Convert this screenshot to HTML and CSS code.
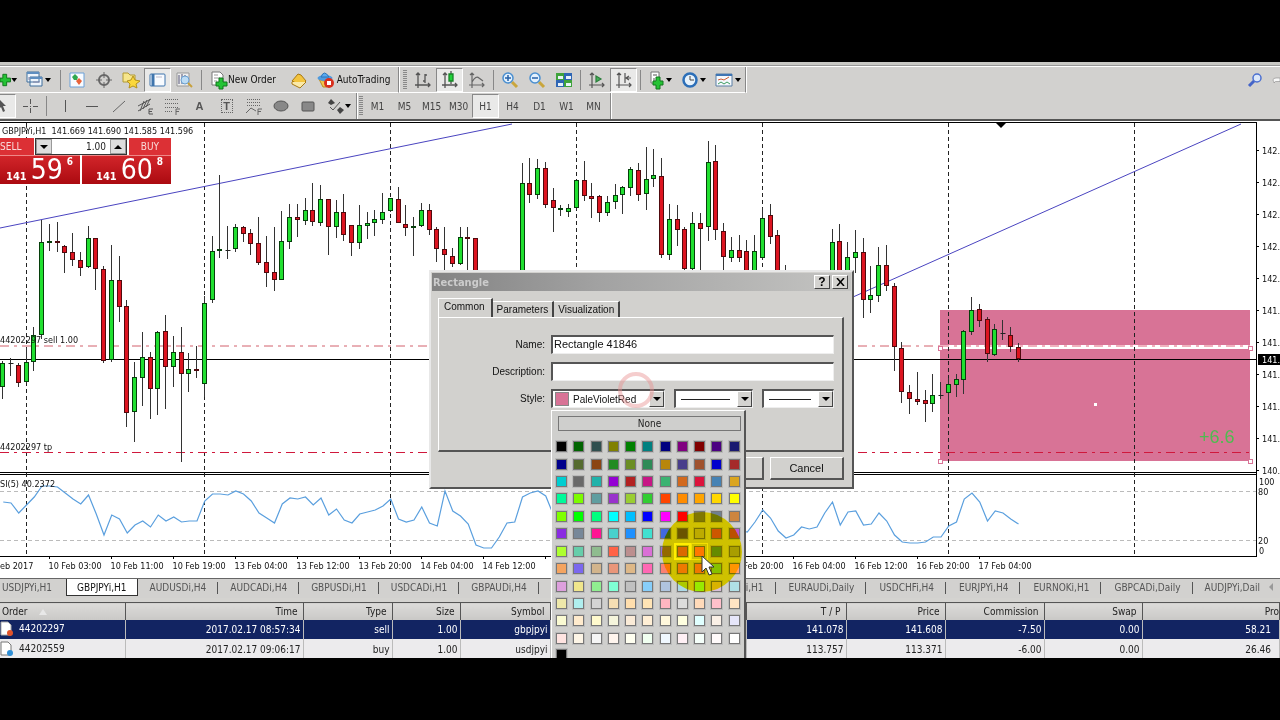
FILE: index.html
```html
<!DOCTYPE html>
<html lang="en">
<head>
<meta charset="utf-8">
<title>GBPJPYi,H1</title>
<link rel="stylesheet" href="styles.css">
</head>
<body>
<main class="app">
  <div class="menu-edge"></div>
  <div class="toolbar">
    <div class="group group-main">
      <button class="tool first" aria-label="New chart"><svg width="20" height="20" viewBox="0 0 20 20"><path class="plus" d="M3 4h4v4h4v4H7v4H3v-4H0V8h3z"/><path d="M12 8h6l-3 4z"/></svg></button>
      <button class="tool wide" aria-label="Profiles"><svg width="26" height="20" viewBox="0 0 26 20"><path d="M2 2h12v10H2zM5 7h12v9H5z" fill="#eef4fb" stroke="#3e6e9c"/><path d="M2 3h12M5 8h12" stroke="#5e8ec0" stroke-width="2"/><path d="M8 12h7M4 7v3" stroke="#88a"/><path d="M20 8h6l-3 4z"/></svg></button>
      <i class="sep"></i>
      <button class="tool" aria-label="Market watch"><svg width="18" height="18" viewBox="0 0 18 18"><path d="M2 2h14v14H2z" fill="#f8fbff" stroke="#6aa0d8"/><path d="M4 6l3-3 3 3-1 3H6z" fill="#2fa84f"/><path d="M8 10l3-3 3 3-3 4z" fill="#e8623a"/></svg></button>
      <button class="tool" aria-label="Data window"><svg width="18" height="18" viewBox="0 0 18 18" fill="none" stroke="#666" stroke-width="2"><circle cx="9" cy="9" r="5"/><path d="M9 1v6M9 11v6M1 9h6M11 9h6" stroke-width="1"/></svg></button>
      <button class="tool" aria-label="Navigator"><svg width="20" height="18" viewBox="0 0 20 18"><path d="M2 2h5l2 2h5v7H2z" fill="#f6e58b" stroke="#b29a35"/><path d="M12 5l2 4 5 1-4 3 1 4-4-2-4 2 1-4-3-3 4-1z" fill="#fbd83b" stroke="#b5921c"/></svg></button>
      <button class="tool pressed" aria-label="Terminal"><svg width="18" height="18" viewBox="0 0 18 18"><rect x="1" y="3" width="15" height="12" rx="1" fill="#f8fbff" stroke="#3f75ad"/><path d="M4 3v12" stroke="#3f75ad" stroke-width="3"/><path d="M7 6h6" stroke="#bbc"/></svg></button>
      <button class="tool" aria-label="Strategy tester"><svg width="20" height="18" viewBox="0 0 20 18"><path d="M2 2h12v13H2z" fill="#eee" stroke="#999"/><path d="M4 4v9M7 3v10M10 4v7" stroke="#557"/><circle cx="10" cy="9" r="4" fill="#bcdcf5" stroke="#6a9fd0"/><path d="M13 12l4 4" stroke="#c8a13c" stroke-width="2"/></svg></button>
      <i class="sep"></i>
      <button class="tool text"><svg width="18" height="20" viewBox="0 0 18 20"><path d="M2 2h8l3 3v10H2z" fill="#fff" stroke="#777"/><path d="M4 5h4M4 8h6M4 11h3" stroke="#999"/><path class="plus" d="M9 8h4v4h4v4h-4v3H9v-3H6v-4h3z"/></svg>New Order</button>
      <button class="tool" aria-label="MetaEditor"><svg width="18" height="18" viewBox="0 0 18 18"><path d="M2 10l6-7 3 1 5 6-5 5z" fill="#f3c43e" stroke="#a87913"/><path d="M2 10l9 5 5-5" fill="none" stroke="#a87913"/><path d="M2 11v2l8 4 6-6" fill="#fae9a8" stroke="#a87913"/></svg></button>
      <button class="tool text auto"><svg width="18" height="18" viewBox="0 0 18 18"><path d="M2 8q5 4 11 0l-3 8H6z" fill="#f3c84e" stroke="#b98f24"/><ellipse cx="8" cy="7" rx="7.500" ry="3" fill="#4f9be0"/><path d="M4 6q3-8 8 0z" fill="#5aaaf0" stroke="#2d75b8"/><circle cx="12" cy="12" r="5" fill="#d8301e"/><path d="M10 10h4v4h-4z" fill="#fff"/></svg>AutoTrading</button>
    </div>
    <div class="group">
      <i class="grip"></i>
      <button class="tool" aria-label="Bar chart"><svg width="18" height="18" viewBox="0 0 18 18" fill="none" stroke="#555" stroke-width="1.3"><path d="M4 2v15M1 14h15M2 4l2-2 2 2M14 12l2 2-2 2M11 3v9M9 10h2M11 4h2"/></svg></button>
      <button class="tool pressed" aria-label="Candlesticks"><svg width="18" height="18" viewBox="0 0 18 18" fill="none" stroke="#555" stroke-width="1.3"><path d="M4 2v15M1 14h15M2 4l2-2 2 2M14 12l2 2-2 2M10 0v13"/><path d="M8 3h4v7H8z" fill="#22d13a" stroke="#168527"/></svg></button>
      <button class="tool" aria-label="Line chart"><svg width="18" height="18" viewBox="0 0 18 18" fill="none" stroke="#666" stroke-width="1.2"><path d="M4 2v15M1 14h15M2 4l2-2 2 2M14 12l2 2-2 2M4 11q4-7 7-4l4 3"/></svg></button>
      <i class="sep"></i>
      <button class="tool" aria-label="Zoom in"><svg width="18" height="18" viewBox="0 0 18 18"><path d="M11 11l5 5" stroke="#c9a63c" stroke-width="3"/><circle cx="7" cy="7" r="5" fill="#e3f1fd" stroke="#4a8fd0" stroke-width="1.5"/><path d="M4 7h6M7 4v6" stroke="#2761a8" stroke-width="1.5"/></svg></button>
      <button class="tool" aria-label="Zoom out"><svg width="18" height="18" viewBox="0 0 18 18"><path d="M11 11l5 5" stroke="#c9a63c" stroke-width="3"/><circle cx="7" cy="7" r="5" fill="#e3f1fd" stroke="#4a8fd0" stroke-width="1.5"/><path d="M4 7h6" stroke="#2761a8" stroke-width="1.5"/></svg></button>
      <button class="tool" aria-label="Tile windows"><svg width="18" height="18" viewBox="0 0 18 18"><path d="M1 2h8v7H1zM9 9h8v7H9z" fill="#3fa33b"/><path d="M9 2h8v7H9zM1 9h8v7H1z" fill="#2f66b5"/><path d="M3 5h5v3H3zM11 5h5v3h-5zM3 12h5v3H3zM11 12h5v3h-5z" fill="#e8f2fa"/></svg></button>
      <i class="sep"></i>
      <button class="tool" aria-label="Auto scroll"><svg width="18" height="18" viewBox="0 0 18 18" fill="none" stroke="#555" stroke-width="1.2"><path d="M4 2v15M1 14h15M2 4l2-2 2 2M14 12l2 2-2 2"/><path d="M8 5l5 3-5 3z" fill="#45b058" stroke="#2b7d3b"/></svg></button>
      <button class="tool pressed" aria-label="Chart shift"><svg width="18" height="18" viewBox="0 0 18 18" fill="none" stroke="#555" stroke-width="1.2"><path d="M4 2v15M1 14h15M2 4l2-2 2 2M14 12l2 2-2 2M10 2v10M16 7h-5M14 5l-3 2 3 2"/></svg></button>
      <i class="sep"></i>
      <button class="tool drop" aria-label="Indicators"><svg width="26" height="20" viewBox="0 0 26 20"><path d="M4 2h8v11H4z" fill="#fff" stroke="#777"/><path d="M6 5h4M7 8v3" stroke="#555"/><path class="plus" d="M9 7h4v4h3v4h-3v4H9v-4H6v-4h3z"/><path d="M19 8h6l-3 4z"/></svg></button>
      <button class="tool drop" aria-label="Periods"><svg width="26" height="20" viewBox="0 0 26 20"><circle cx="9" cy="10" r="6.500" fill="#e8f3fc" stroke="#2c6fb8" stroke-width="2.500"/><path d="M9 6v4h4" fill="none" stroke="#444"/><path d="M19 8h6l-3 4z"/></svg></button>
      <button class="tool drop" aria-label="Templates"><svg width="26" height="20" viewBox="0 0 26 20"><path d="M1 4h16v12H1z" fill="#f4f8fc" stroke="#5b7ea5"/><path d="M1 5h16" stroke="#3e75b4" stroke-width="2"/><path d="M3 10l3-1 3 1 5-3" fill="none" stroke="#cf5b33"/><path d="M3 14l3-2 3 2 3-2 3 2" fill="none" stroke="#3d9c60"/><path d="M20 8h6l-3 4z"/></svg></button>
    </div>
    <div class="right-tools">
      <button class="tool" aria-label="Search"><svg width="16" height="16" viewBox="0 0 16 16"><circle cx="10" cy="6" r="4" fill="#dce8fa" stroke="#4b6fd0" stroke-width="1.500"/><path d="M7 9l-5 5" stroke="#4464c8" stroke-width="3"/></svg></button>
      <button class="tool chat" aria-label="Messages"><svg width="16" height="16" viewBox="0 0 16 16"><path d="M8 4q-6 0-6 4 0 2 2 3v3l3-3h9V4z" fill="#f8f8f8" stroke="#777"/></svg></button>
    </div>
  </div>
  <div class="toolbar second">
    <div class="group group-main">
      <button class="tool cursor-tool pressed" aria-label="Cursor"><svg width="12" height="16" viewBox="0 0 12 16"><path d="M0 2l6 6H3l2 5-2 1-2-5-1 1z" fill="#555"/></svg></button>
      <button class="tool" aria-label="Crosshair"><svg width="16" height="16" viewBox="0 0 16 16" stroke="#555"><path d="M8.500 1v5M8.500 10v5M1 8.500h5M11 8.500h5M8 8.500h1"/></svg></button>
      <i class="sep big"></i>
      <button class="tool" aria-label="Vertical line"><svg width="16" height="16" viewBox="0 0 16 16" stroke="#555"><path d="M8.500 2v12"/></svg></button>
      <button class="tool" aria-label="Horizontal line"><svg width="16" height="16" viewBox="0 0 16 16" stroke="#555"><path d="M2 8.500h12"/></svg></button>
      <button class="tool" aria-label="Trendline"><svg width="16" height="16" viewBox="0 0 16 16" stroke="#666"><path d="M2 14L14 3"/></svg></button>
      <button class="tool" aria-label="Equidistant channel"><svg width="18" height="18" viewBox="0 0 18 18" stroke="#555" fill="none"><path d="M1 9L14 2M1 14l12-7M3 14L7 4M6 12L10 3M9 10l4-8"/><path d="M16 12h-4v5h4M12 14.500h3"/></svg></button>
      <button class="tool" aria-label="Fibonacci"><svg width="18" height="18" viewBox="0 0 18 18" stroke="#666" fill="none"><path d="M1 2.500h14M1 6.500h14M1 10.500h14M1 14.500h8" stroke-dasharray="1 1"/><path d="M16 12h-4v6M12 14.500h3"/></svg></button>
      <button class="tool letter">A</button>
      <button class="tool letter"><span class="boxed">T</span></button>
      <button class="tool" aria-label="Expansion"><svg width="18" height="18" viewBox="0 0 18 18" stroke="#666" fill="none"><path d="M2 2.500h14M2 5.500h14M2 8.500h14" stroke-dasharray="1 1"/><path d="M1 16l5-5 5 3M17 12h-4v6M13 14.500h3"/></svg></button>
      <button class="tool" aria-label="Ellipse"><svg width="18" height="16" viewBox="0 0 18 16"><ellipse cx="9" cy="8" rx="7" ry="5" fill="#888" stroke="#555"/></svg></button>
      <button class="tool" aria-label="Rectangle"><svg width="18" height="16" viewBox="0 0 18 16"><rect x="3" y="4" width="12" height="9" rx="1" fill="#888" stroke="#555"/></svg></button>
      <button class="tool shapes" aria-label="Arrows"><svg width="26" height="18" viewBox="0 0 26 18"><path d="M5 2l4 4-4 2-3-2zM14 10l4 3-4 4-3-4z" fill="#444"/><path d="M4 10l3 3 7-8" stroke="#555" fill="none"/><path d="M19 7h6l-3 4z"/></svg></button>
    </div>
    <div class="group periods">
      <i class="grip"></i>
      <button class="tool">M1</button><button class="tool">M5</button><button class="tool">M15</button><button class="tool">M30</button><button class="tool pressed">H1</button><button class="tool">H4</button><button class="tool">D1</button><button class="tool">W1</button><button class="tool">MN</button>
    </div>
  </div>

  <section class="chart">
    <svg id="plot" class="plot" viewBox="0 121 1280 457" preserveAspectRatio="xMinYMin slice" role="img" aria-label="GBPJPY hourly candles with RSI"></svg>
    <div class="trade">
      <button class="deal sell-label">SELL</button>
      <div class="lot"><button aria-label="Decrease volume"><i class="down"></i></button><input value="1.00" aria-label="Volume"><button aria-label="Increase volume"><i class="up"></i></button></div>
      <button class="deal">BUY</button>
      <button class="quote bid"><small>141</small><b>59</b><sup>6</sup></button>
      <button class="quote ask"><small>141</small><b>60</b><sup>8</sup></button>
    </div>
  </section>

  <nav class="charts">
    <a href="#" class="lead">USDJPYi,H1</a><a href="#" class="active">GBPJPYi,H1</a><a href="#">AUDUSDi,H4</a><a href="#">AUDCADi,H4</a><a href="#">GBPUSDi,H1</a><a href="#">USDCADi,H1</a><a href="#">GBPAUDi,H4</a><a href="#">NZDUSDi,H4</a>
    <span class="more"><a href="#">AUDNZDi,H1</a><a href="#">EURAUDi,Daily</a><a href="#">USDCHFi,H4</a><a href="#">EURJPYi,H4</a><a href="#">EURNOKi,H1</a><a href="#">GBPCADi,Daily</a><a href="#" class="last">AUDJPYi,Dail</a></span>
    <button class="scroll" aria-label="Scroll tabs"><svg width="8" height="8" viewBox="0 0 8 8"><path d="M5 0v8L1 4z" fill="#999"/></svg></button>
  </nav>

  <table class="orders">
    <colgroup><col class="c1"><col class="c2"><col class="c3"><col class="c4"><col class="c5"><col class="c6"><col class="c7"><col class="c8"><col class="c9"><col class="c10"><col></colgroup>
    <thead><tr><th class="id">Order <span class="asc"></span></th><th>Time</th><th>Type</th><th>Size</th><th>Symbol</th><th></th><th>T / P</th><th>Price</th><th>Commission</th><th>Swap</th><th class="profit">Pro</th></tr></thead>
    <tbody>
      <tr class="selected"><td class="id"><svg width="14" height="16" viewBox="0 0 14 16"><path d="M1 1h7l3 3v10H1z" fill="#fff" stroke="#aaa"/><circle cx="10" cy="12" r="3" fill="#e2532a"/></svg>44202297</td><td>2017.02.17 08:57:34</td><td>sell</td><td>1.00</td><td>gbpjpyi</td><td></td><td>141.078</td><td>141.608</td><td>-7.50</td><td>0.00</td><td class="gain">58.21</td></tr>
      <tr><td class="id"><svg width="14" height="16" viewBox="0 0 14 16"><path d="M1 1h7l3 3v10H1z" fill="#fff" stroke="#777"/><circle cx="10" cy="12" r="3" fill="#2f8fd6"/></svg>44202559</td><td>2017.02.17 09:06:17</td><td>buy</td><td>1.00</td><td>usdjpyi</td><td></td><td>113.757</td><td>113.371</td><td>-6.00</td><td>0.00</td><td class="gain">26.46</td></tr>
    </tbody>
  </table>

  <section class="dialog" role="dialog" aria-label="Rectangle">
    <header class="title"><h2>Rectangle</h2><button aria-label="Help">?</button><button aria-label="Close"><svg width="9" height="8" viewBox="0 0 9 8"><path d="M1 0l7 8M8 0L1 8" stroke="#000" stroke-width="1.500"/></svg></button></header>
    <div class="tabs"><button class="on">Common</button><button>Parameters</button><button>Visualization</button></div>
    <form class="sheet">
      <label for="name">Name:</label><input id="name" value="Rectangle 41846">
      <label for="desc">Description:</label><input id="desc">
      <label for="color">Style:</label>
      <div class="styles">
        <div class="combo color"><select id="color"><option>PaleVioletRed</option></select><i></i></div>
        <div class="combo line mid"><select aria-label="Line style"><option></option></select><i></i></div>
        <div class="combo line"><select aria-label="Line width"><option></option></select><i></i></div>
      </div>
    </form>
    <div class="actions"><button>OK</button><button>Cancel</button></div>
  </section>
  <svg class="click-ring" width="38" height="38" viewBox="0 0 38 38"><circle cx="19" cy="19" r="16" fill="none" stroke="#e89090" stroke-opacity=".45" stroke-width="4"/></svg>

  <div class="palette">
    <button class="none">None</button>
    <div class="swatches" id="swatches"></div>
    <button class="swatch extra" aria-label="Custom"></button>
  </div>
  <div class="spot"></div>
  <svg class="pointer" width="14" height="22" viewBox="0 0 14 22"><path d="M1 1v16l4-4 3 7 3-1-3-7h5z" fill="#fff" stroke="#333"/></svg>
</main>
<script src="chart.js"></script>
</body>
</html>
```
FILE: styles.css
```css
* { box-sizing: border-box; }
body { margin: 0; background: #000; font: 10px "DejaVu Sans Condensed", "DejaVu Sans", sans-serif; color: #222; }
button, input, select { font: inherit; color: inherit; border: 0; margin: 0; padding: 0; border-radius: 0; }
button { background: none; }
.app { position: relative; margin: 62px 0; height: calc(100vh - 124px); overflow: hidden; background: #d4d3d0; display: flex; flex-direction: column; }
.menu-edge { height: 4px; flex: none; background: #c8c8c4; border-bottom: 1px solid #999; }

.toolbar { display: flex; flex: none; height: 27px; border-top: 1px solid #fff; background: #d2d1cf; }
.toolbar.second { border-top: 0; border-bottom: 2px solid #555; height: 28px; }
.group { display: flex; align-items: center; border-right: 1px solid #888; border-bottom: 1px solid #fff; box-shadow: 1px 0 #fff; }
.second .group { border-bottom: 0; }
.tool { width: 27px; height: 24px; display: flex; align-items: center; justify-content: center; flex: none; color: #444; }
.pressed { background: #e9e9e8; border: 1px solid; border-color: #888 #fff #fff #888; }
.first { width: 19px; justify-content: flex-start; }
.wide { width: 38px; }
.drop { width: 34px; }
.text { width: 81px; color: #111; padding-right: 3px; }
.auto { width: 86px; gap: 2px; }
.plus { fill: #25c335; stroke: #11761c; }
.sep { width: 6px; height: 20px; flex: none; background: linear-gradient(#888, #888) 3px 0 / 1px 100% no-repeat; }
.sep.big { width: 8px; }
.grip { width: 10px; height: 20px; flex: none; background: repeating-linear-gradient(#888 0 1px, transparent 1px 2px) 4px 0 / 4px 100% no-repeat; }
.periods .grip { width: 7px; background-position: 2px 0; }
.periods { padding-right: 3px; }
.right-tools { margin-left: auto; display: flex; align-items: center; }
.right-tools .chat { width: 12px; justify-content: flex-start; overflow: hidden; padding-left: 4px; }
.cursor-tool { width: 16px; justify-content: flex-start; border-left: 0; }
.shapes { width: 35px; }
.letter { font: bold 11px "Liberation Sans", sans-serif; color: #555; }
.boxed { border: 1px dotted #666; width: 12px; line-height: 12px; }

.chart { position: relative; flex: none; height: 457px; background: #fff; }
.plot { display: block; width: 100%; height: 100%; }
.plot text { font-size: 9px; fill: #111; white-space: pre; }
.trade { position: absolute; left: 0; top: 17px; width: 171px; display: grid; grid-template-columns: 34px 46px 2px 47px 42px; grid-template-rows: 17px 29px; }
.deal { background: #dc3035; color: #f8d9d9; height: 17px; }
.sell-label { text-align: left; }
.lot { grid-column: 2 / 5; display: flex; border: 1px solid #333; margin: 0 2px 0 1px; background: #fff; height: 17px; }
.lot button { width: 16px; background: #ddd; display: grid; place-items: center; border: 1px solid #999; flex: none; }
.lot input { flex: 1; min-width: 0; text-align: right; padding-right: 4px; background: #fff; }
.down, .up { border: 4px solid transparent; border-top: 4px solid #000; border-bottom: 0; }
.up { border-bottom: 4px solid #000; border-top: 0; }
.quote { grid-column: 1 / 3; background: linear-gradient(#d2252a, #ab0a10); color: #fff; display: flex; align-items: flex-end; line-height: 1; padding: 0 4px 2px 6px; height: 29px; gap: 4px; border-top: 1px solid #e88; }
.quote.ask { grid-column: 4 / 6; padding-left: 14px; }
.quote small { font-size: 11px; font-weight: bold; }
.quote b { font-size: 28px; font-weight: normal; line-height: 24px; }
.quote sup { font-size: 10px; font-weight: bold; align-self: flex-start; padding-top: 1px; }

.charts { display: flex; flex: none; height: 20px; border-top: 1px solid #666; background: #d2d1cf; white-space: nowrap; overflow: hidden; }
.charts a { color: #555; text-decoration: none; padding: 0 12px; line-height: 17px; height: 17px; flex: none; background: linear-gradient(#555, #555) 100% 3px / 1px 12px no-repeat; }
.charts .lead { padding: 0 14px 0 2px; background: none; }
.charts .active { background: #fff; color: #111; border: 1px solid #333; border-top: 0; padding: 0 10px; }
.charts .more { margin-left: auto; display: flex; }
.charts .more a { padding: 0 12px 0 13px; }
.charts .more .last { background: none; padding: 0 4px 0 12px; }
.scroll { width: 16px; height: 17px; flex: none; }

.orders { width: 100%; table-layout: fixed; border-collapse: collapse; flex: none; margin-top: 4px; }
.orders th { height: 17px; font-weight: normal; background: linear-gradient(#dcdbd9, #c9c8c6); border-right: 1px solid #555; border-top: 1px solid #555; }
.orders th, .orders td { text-align: right; padding: 0 5px 0 0; white-space: nowrap; overflow: hidden; }
.orders td { height: 19px; border-right: 1px solid #bbb; padding-right: 2px; }
.orders tbody tr { background: #ecebed; height: 21px; }
.orders tbody .selected { background: #122462; color: #fff; height: 19px; }
.orders .id { text-align: left; padding-left: 2px; }
.orders td.id svg { vertical-align: middle; margin-right: 5px; margin-left: -2px; }
.orders .gain { padding-right: 8px; }
.orders .profit { padding-right: 0; }
.asc { display: inline-block; border: 4px solid transparent; border-top: 0; border-bottom: 6px solid #e8e8e8; margin-left: 9px; }
.c1 { width: 125px; } .c2 { width: 178px; } .c3 { width: 89px; } .c4 { width: 68px; } .c5 { width: 90px; }
.c6 { width: 196px; } .c7 { width: 100px; } .c8, .c9 { width: 99px; } .c10 { width: 98px; }

.dialog { position: absolute; left: 429px; top: 208px; width: 425px; height: 219px; background: #d2d1ce; border: 2px solid; border-color: #e8e8e8 #555 #555 #e8e8e8; padding: 1px 8px 0 1px; font: 10px "Liberation Sans", Arial, sans-serif; color: #111; display: flex; flex-direction: column; }
.title { display: flex; align-items: center; flex: none; height: 18px; margin-right: -7px; padding: 0 3px 0 1px; background: linear-gradient(90deg, #838383, #a2a2a2 40%, #c4c4c2); gap: 2px; }
.title h2 { margin: 0 auto 0 0; font: bold 11px "DejaVu Sans Condensed", sans-serif; color: #ccc; }
.title button { width: 16px; height: 14px; background: #d4d3d0; border: 1px solid; border-color: #fff #444 #444 #fff; font-weight: bold; font-size: 12px; line-height: 10px; display: grid; place-items: center; color: #000; }
.tabs { display: flex; align-items: flex-end; padding-left: 6px; height: 26px; flex: none; }
.tabs button { height: 16px; padding: 0 4px; border: solid; border-width: 1px 2px 0 0; border-color: #fff #444; }
.tabs .on { height: 19px; padding: 0 6px 3px 5px; border-left: 1px solid #fff; background: #d2d1ce; }
.sheet { flex: none; height: 135px; margin-left: 6px; padding: 17px 9px 0 8px; border: 1px solid; border-color: #fff #555 #555 #fff; border-right-width: 2px; border-bottom-width: 2px; display: grid; grid-template-columns: 98px 1fr; grid-auto-rows: 19px; row-gap: 8px; column-gap: 6px; align-items: center; }
.sheet label { text-align: right; }
.sheet input { width: 100%; height: 19px; background: #fff; padding: 0 1px 2px; border: 1px solid #eee; border-top: 2px solid #555; border-left: 2px solid #555; font-size: 11px; }
.styles { display: flex; gap: 9px; }
.combo { position: relative; width: 72px; height: 19px; background: #fff; border: 1px solid #eee; border-top: 2px solid #555; border-left: 2px solid #555; }
.combo.color { width: 114px; }
.combo.mid { width: 79px; }
.combo select { appearance: none; width: 100%; height: 16px; background: transparent; display: block; }
.combo.color select { padding-left: 20px; background: linear-gradient(#d87396, #d87396) 3px 2px / 12px 12px no-repeat, linear-gradient(#888, #888) 2px 1px / 14px 14px no-repeat; }
.combo.line select { background: linear-gradient(#222, #222) 5px 8px / calc(100% - 27px) 1px no-repeat; }
.combo i { position: absolute; right: 0; top: 0; width: 15px; height: 16px; background: #d4d3d0; border: 1px solid; border-color: #fff #444 #444 #fff; pointer-events: none; }
.combo i::after { content: ""; position: absolute; left: 3px; top: 5px; border: 4px solid transparent; border-top-color: #000; border-bottom: 0; }
.actions { display: flex; justify-content: flex-end; gap: 6px; margin-top: 5px; font-size: 11px; }
.actions button { width: 74px; height: 23px; border: 1px solid; border-color: #fff #555 #555 #fff; border-right-width: 2px; border-bottom-width: 2px; }
.click-ring { position: absolute; left: 617px; top: 309px; }

.palette { position: absolute; left: 551px; top: 348px; width: 195px; height: 260px; background: #cfcfcd; border: 1px solid #fff; border-right: 2px solid #555; padding: 5px 0 0 4px; }
.none { display: block; width: 183px; height: 15px; margin-left: 2px; border: 1px solid #777; }
.swatches { display: grid; grid-template-columns: repeat(11, 1fr); height: 209px; margin: 7px -2px 0 0; align-items: center; }
.swatch { display: block; width: 11px; height: 11px; border: 1px solid #777; box-shadow: 0 0 0 1px #bbb; }
.swatch.picked { outline: 2px solid #ff0; outline-offset: 1px; box-shadow: none; }
.swatch.near { outline: 1px solid #f4f000; outline-offset: 2px; box-shadow: none; }
.extra { background: #000; margin-top: 2px; }
.spot { position: absolute; left: 662px; top: 450px; width: 80px; height: 80px; border-radius: 50%; background: #ffee00; mix-blend-mode: multiply; pointer-events: none; }
.pointer { position: absolute; left: 701px; top: 493px; pointer-events: none; }
```
FILE: chart.js
```js
const NS = "http://www.w3.org/2000/svg";
const plot = document.getElementById("plot");
function add(tag, attrs, text) {
  const el = document.createElementNS(NS, tag);
  for (const k in attrs) el.setAttribute(k, attrs[k]);
  if (text) el.textContent = text;
  plot.appendChild(el);
}
function line(x1, y1, x2, y2, stroke, dash) {
  const a = { x1, y1, x2, y2, stroke };
  if (dash) a["stroke-dasharray"] = dash;
  add("line", a);
}
const barX = i => 3.25 + 7.75 * i;

// index, high, body top, body bottom, low, direction
const candles = `0 361 363 387 399 g;1 358 363 364 376 d;2 363 365 383 387 r;3 348 362 382 383 g;4 327 335 362 371 g;5 220 242 335 339 g;6 224 241 243 251 g;7 222 241 243 252 r;8 245 246 253 273 r;9 233 252 260 266 r;10 252 260 268 276 r;11 226 238 267 268 g;12 238 238 269 290 r;13 266 269 361 363 r;14 245 280 360 362 g;15 256 280 307 322 r;16 300 306 413 427 r;17 362 377 412 442 g;18 332 357 378 406 g;19 352 357 389 419 r;20 331 332 389 415 g;21 315 331 367 409 r;22 336 352 367 387 g;23 327 352 374 462 r;24 353 369 374 392 g;25 346 369 371 378 r;26 296 303 384 397 g;27 236 251 300 303 g;28 175 249 251 258 g;29 226 250 251 259 d;30 224 227 249 252 g;31 226 227 234 242 r;32 229 233 244 255 r;33 217 243 263 265 r;34 236 262 273 287 r;35 227 272 280 291 r;36 211 241 280 280 g;37 204 217 242 249 g;38 204 217 220 237 r;39 198 210 221 225 g;40 183 210 222 226 r;41 185 199 223 226 g;42 199 199 227 255 r;43 200 212 227 238 g;44 194 212 235 241 r;45 225 225 243 256 r;46 205 225 243 249 g;47 212 223 226 239 g;48 210 219 223 236 g;49 193 212 220 224 g;50 198 198 211 212 g;51 187 199 223 223 r;52 205 224 228 236 r;53 217 226 228 256 g;54 203 210 226 227 g;55 204 210 230 235 r;56 227 229 249 262 r;57 227 249 255 272 r;58 248 256 264 267 r;59 227 237 264 265 g;60 227 237 239 275 r;61 238 238 300 300 r;67 163 183 300 300 g;68 158 183 195 203 r;69 159 168 195 199 g;70 162 168 205 208 r;71 188 200 208 232 r;72 205 208 210 216 g;73 204 208 212 217 g;74 180 180 208 210 g;75 161 180 196 201 r;76 183 196 199 218 r;77 195 196 213 222 r;78 196 202 213 216 g;79 184 195 202 209 g;80 186 187 195 214 g;81 167 169 188 196 g;82 163 170 195 201 r;83 147 179 194 210 g;84 149 175 179 187 g;85 158 176 255 258 r;86 204 219 255 260 g;87 205 219 230 246 r;88 227 229 269 270 r;89 212 223 269 270 g;90 213 223 229 270 r;91 141 162 227 241 g;92 145 161 230 240 r;93 223 231 257 300 r;94 237 250 258 262 g;95 235 250 258 262 r;96 240 251 300 300 r;97 235 251 300 300 g;98 208 218 258 260 g;99 204 215 237 244 r;100 230 235 300 300 r;101 265 280 300 300 r;107 229 242 300 300 g;108 224 241 300 300 r;109 242 257 300 300 g;110 230 252 258 273 g;111 238 252 300 318 r;112 266 295 300 313 g;113 247 265 296 302 g;114 245 265 286 291 r;115 283 286 347 371 r;116 342 348 392 403 r;117 385 392 399 414 r;118 372 399 402 405 r;119 390 400 404 422 r;120 374 395 404 412 g;121 382 395 396 399 d;122 378 384 393 410 g;123 374 379 385 397 g;124 330 331 380 394 g;125 297 310 332 335 g;126 304 309 321 327 r;127 317 319 354 362 r;128 324 329 355 356 g;129 320 333 334 340 d;130 327 335 347 352 r;131 343 347 359 362 r`
  .split(";").map(s => s.split(" "));

const rsi = [502,503,513,505,497,486,486,487,493,499,504,495,514,535,515,519,533,525,521,527,515,521,517,522,521,521,501,494,494,495,491,494,501,513,518,523,504,498,499,497,505,498,515,509,520,523,514,512,510,506,499,519,522,520,507,523,526,491,511,516,524,545,548,548,537,523,522,497,493,491,496,515,520,510,500,510,520,525,520,515,510,505,500,505,510,530,520,525,530,520,515,500,510,520,530,530,532,522,510,518,531,538,535,527,529,527,513,502,525,512,511,525,524,513,521,535,542,543,543,542,537,537,526,522,499,493,502,521,511,513,519,524];

// Highlighted zone
add("rect", { x: 940, y: 310, width: 310, height: 151, fill: "#d87396" });
add("rect", { x: 940, y: 345, width: 310, height: 4, fill: "#fff" });

// Frames and day separators
line(0, 122.5, 1256, 122.5, "#000");
line(1256.5, 122, 1256.5, 557, "#000");
line(0, 472.5, 1257, 472.5, "#000");
line(0, 474.5, 1257, 474.5, "#000");
line(0, 556.5, 1257, 556.5, "#000");
[26.5, 204.5, 390.5, 576.5, 762.5, 948.5, 1134.5].forEach(x => line(x, 123, x, 556, "#222", "4 3"));
[491.5, 540.5].forEach(y => line(0, y, 1256, y, "#bbb", "4 3"));
add("path", { d: "M996 123h10l-5 5z" });

// Trend lines, order levels and current price
line(0, 228, 512, 124, "#4a44c0");
line(853, 297, 1241, 124, "#4a44c0");
line(0, 346, 940, 346, "#d2606c", "9 5 3 5");
line(940, 346, 1250, 346, "#e0647c", "9 5 3 5");
line(0, 452.5, 1250, 452.5, "#d0183c", "9 5 3 5");
line(0, 359.5, 1256, 359.5, "#000");

candles.forEach(([i, h, t, b, l, c]) => {
  const x = Math.round(barX(+i)) - 0.5;
  line(x, h, x, l, "#333");
  if (c === "d") line(x - 2, +t + 0.5, x + 3, +t + 0.5, "#222");
  else add("rect", { x: x - 2, y: +t + 0.5, width: 4, height: Math.max(1, b - t - 1), fill: c === "g" ? "#20e030" : "#dd1420", stroke: c === "g" ? "#063f0b" : "#500a0e" });
});
add("polyline", { points: rsi.map((y, i) => barX(i) + "," + y).join(" "), fill: "none", stroke: "#5a9fde", "stroke-width": 1.2 });

[[940, 348], [1250, 348], [940, 461], [1250, 461]].forEach(([x, y]) => add("rect", { x: x - 1.5, y: y - 1.5, width: 4, height: 4, fill: "#fff", stroke: "#d87396" }));
add("rect", { x: 1094, y: 403, width: 3, height: 3, fill: "#fff" });
add("text", { x: 1199, y: 443, style: "font:18px 'Liberation Sans',sans-serif;fill:#4fbb50" }, "+6.6");

// Axis labels
["142.7", "142.5", "142.4", "142.2", "142.1", "141.8", "141.6", "141.5", "141.3", "141.1", "140.9"].forEach((t, k) => {
  const y = 150 + 32 * k;
  line(1257, y + 0.5, 1259, y + 0.5, "#000");
  add("text", { x: 1262, y: y + 4 }, t);
});
add("rect", { x: 1258, y: 354, width: 22, height: 11 });
add("text", { x: 1262, y: 363, style: "fill:#fff" }, "141.5");
[["100", 485, 1259], ["80", 495, 1258], ["20", 544, 1258], ["0", 554, 1259]].forEach(([t, y, x]) => add("text", { x, y }, t));
add("text", { x: 0, y: 569 }, "eb 2017");
["10 Feb 03:00", "10 Feb 11:00", "10 Feb 19:00", "13 Feb 04:00", "13 Feb 12:00", "13 Feb 20:00", "14 Feb 04:00", "14 Feb 12:00", "", "", "", "15 Feb 20:00", "16 Feb 04:00", "16 Feb 12:00", "16 Feb 20:00", "17 Feb 04:00"].forEach((t, k) => {
  const x = 49.5 + 62 * k;
  line(x, 557, x, 559, "#000");
  add("text", { x: x - 1, y: 569 }, t);
});
add("text", { x: 2, y: 134 }, "GBPJPYi,H1  141.669 141.690 141.585 141.596");
add("text", { x: 0, y: 343 }, "44202297 sell 1.00");
add("text", { x: 0, y: 450 }, "44202297 tp");
add("text", { x: 0, y: 487 }, "SI(5) 40.2372");

const colors = `Black DarkGreen DarkSlateGray Olive Green Teal Navy Purple Maroon Indigo MidnightBlue
DarkBlue DarkOliveGreen SaddleBrown ForestGreen OliveDrab SeaGreen DarkGoldenrod DarkSlateBlue Sienna MediumBlue Brown
DarkTurquoise DimGray LightSeaGreen DarkViolet FireBrick MediumVioletRed MediumSeaGreen Chocolate Crimson SteelBlue Goldenrod
MediumSpringGreen LawnGreen CadetBlue DarkOrchid YellowGreen LimeGreen OrangeRed DarkOrange Orange Gold Yellow
Chartreuse Lime SpringGreen Aqua DeepSkyBlue Blue Magenta Red Gray SlateGray Peru
BlueViolet LightSlateGray DeepPink MediumTurquoise DodgerBlue Turquoise RoyalBlue SlateBlue DarkKhaki IndianRed MediumOrchid
GreenYellow MediumAquamarine DarkSeaGreen Tomato RosyBrown Orchid MediumPurple PaleVioletRed Coral CornflowerBlue DarkGray
SandyBrown MediumSlateBlue Tan DarkSalmon BurlyWood HotPink Salmon Violet LightCoral SkyBlue LightSalmon
Plum Khaki LightGreen Aquamarine Silver LightSkyBlue LightSteelBlue LightBlue PaleGreen Thistle PowderBlue
PaleGoldenrod PaleTurquoise LightGray Wheat NavajoWhite Moccasin LightPink Gainsboro PeachPuff Pink Bisque
LightGoldenrodYellow BlanchedAlmond LemonChiffon Beige AntiqueWhite PapayaWhip Cornsilk LightYellow LightCyan Linen Lavender
MistyRose OldLace WhiteSmoke Seashell Ivory Honeydew AliceBlue LavenderBlush MintCream Snow White`.split(/\s+/);
const box = document.getElementById("swatches");
colors.forEach(c => {
  const b = document.createElement("button");
  b.className = "swatch" + (c === "PaleVioletRed" ? " picked" : c === "Coral" ? " near" : "");
  b.style.background = c;
  b.setAttribute("aria-label", c);
  box.appendChild(b);
});
```
